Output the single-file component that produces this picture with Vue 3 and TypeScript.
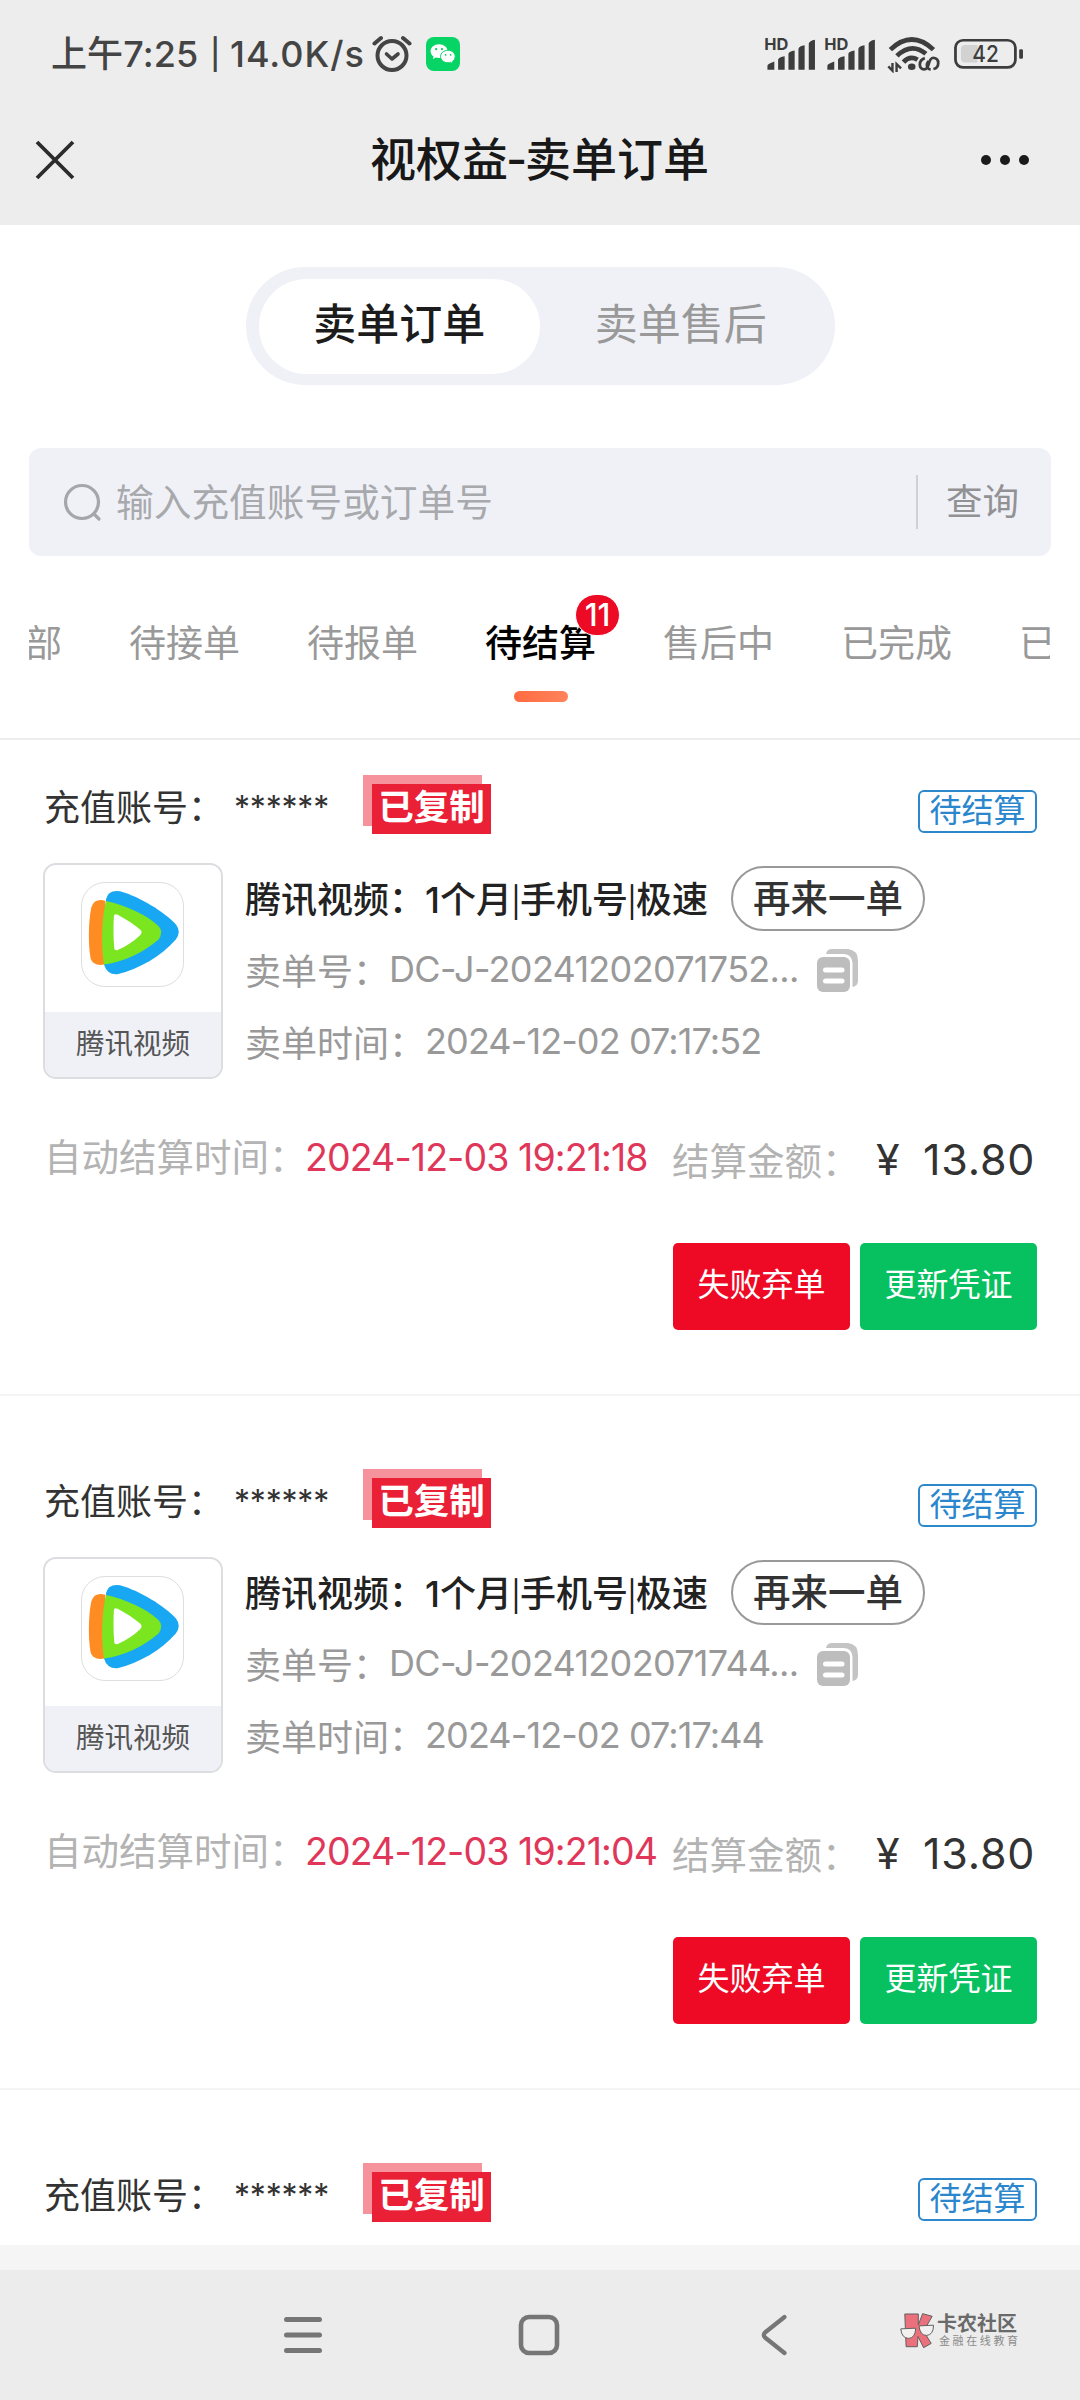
<script setup lang="ts">
interface OrderDetail {
  id: string
  soldAt: string
  settleAt: string
}

interface Order {
  key: number
  detail?: OrderDetail
}

interface Tab {
  label: string
  badge?: number
}

const tabs: Tab[] = [
  { label: '全部' },
  { label: '待接单' },
  { label: '待报单' },
  { label: '待结算', badge: 11 },
  { label: '售后中' },
  { label: '已完成' },
  { label: '已取消' },
]
const activeTab = '待结算'

const orders: Order[] = [
  { key: 1, detail: { id: 'DC-J-20241202071752...', soldAt: '2024-12-02 07:17:52', settleAt: '2024-12-03 19:21:18' } },
  { key: 2, detail: { id: 'DC-J-20241202071744...', soldAt: '2024-12-02 07:17:44', settleAt: '2024-12-03 19:21:04' } },
  { key: 3 },
]
</script>

<template>
  <div class="screen">
    <header class="top">
      <div class="status">
        <span class="clock">上午7:25</span>
        <span class="bar">|</span>
        <span class="speed">14.0K/s</span>
        <svg class="alarm" viewBox="0 0 40 38" width="40" height="38" fill="none" stroke="#444" stroke-linecap="round">
          <circle cx="20" cy="20.5" r="14.5" stroke-width="4" />
          <path d="M2.5 8.5 9 3M37.500 8.500 31 3" stroke-width="4" />
          <path d="M14.500 19 20 24 26 19" stroke-width="3.600" stroke-linejoin="round" />
        </svg>
        <svg class="wechat" viewBox="0 0 34 34" width="34" height="34">
          <rect width="34" height="34" rx="8" fill="#06d465" />
          <path d="M13 7.200c-4.800 0-8.400 3.100-8.400 7 0 2.200 1.100 4.100 3 5.400l-.7 2.500 2.900-1.500c1 .3 2.100.5 3.300.5 4.800 0 8.500-3.100 8.500-6.900s-3.800-7-8.600-7z" fill="#fff" />
          <path d="M22 13.300c-4.200 0-7.500 2.800-7.500 6.300s3.300 6.200 7.500 6.200c.9 0 1.800-.1 2.600-.4l2.400 1.300-.6-2.200c1.700-1.200 2.800-2.900 2.800-4.900 0-3.500-3-6.300-7.200-6.300z" fill="#fff" stroke="#06d465" stroke-width="1" />
          <g fill="#06c95c">
            <circle cx="10.200" cy="12.200" r="1.100" /><circle cx="16" cy="12.200" r="1.100" />
            <circle cx="19.600" cy="17.800" r=".9" /><circle cx="24.600" cy="17.800" r=".9" />
          </g>
        </svg>
        <svg class="signals" viewBox="650 105 755 115" width="260" height="38" preserveAspectRatio="none" fill="#3d3d3d">
          <g v-for="dx in [0, 174]" :key="dx" :transform="`translate(${dx} 0)`">
            <text x="651" y="150" font-size="50" font-weight="700" textLength="70" lengthAdjust="spacingAndGlyphs">HD</text>
            <path d="M660 210v-12q0-6 20-13v25zM691 210v-31q2-7 19-10v41zM721 210v-48q2-8 18-10v58zM750 210v-63q2-9 18-11v74zM780 210v-79q2-9 18-12v91z" />
          </g>
          <g fill="none" stroke="#3d3d3d" stroke-width="14">
            <path d="M1017 149Q1079 88 1142 149" />
            <path d="M1036 168Q1079 126 1120 162" />
            <path d="M1055 187Q1074 166 1096 180" />
          </g>
          <ellipse cx="1079" cy="201" rx="11" ry="10" />
          <path d="M1023 190v23l-12-13M1035 217v-24l13 13" fill="none" stroke="#3d3d3d" stroke-width="7" />
          <path d="M1117 175C1098 181 1098 209 1115 209 1134 208 1124 174 1142 174 1161 176 1160 204 1142 208M1128 184C1118 197 1125 209 1134 209" fill="none" stroke="#3d3d3d" stroke-width="8" />
          <rect x="1206" y="121" width="174" height="82" rx="22" fill="none" stroke="#3d3d3d" stroke-width="8" />
          <path d="M1234 135h36v53h-36q-12 0-12-12v-29q0-12 12-12z" fill="#d2d2d2" />
          <text x="1255" y="188" font-size="69" textLength="77" lengthAdjust="spacingAndGlyphs">42</text>
          <rect x="1391" y="148" width="11" height="29" rx="4" />
        </svg>
      </div>
      <div class="titlebar">
        <svg class="close" viewBox="0 0 40 40" width="40" height="40" stroke="#2b2b2b" stroke-width="3.800"><path d="M2 2 38 38M38 2 2 38" /></svg>
        <h1>视权益<span>-</span>卖单订单</h1>
        <svg class="more" viewBox="0 0 50 12" width="50" height="12" fill="#1b1b1b"><circle cx="6" cy="6" r="5" /><circle cx="25" cy="6" r="5" /><circle cx="44" cy="6" r="5" /></svg>
      </div>
    </header>

    <div class="segmented">
      <button class="seg on">卖单订单</button>
      <button class="seg">卖单售后</button>
    </div>

    <div class="search">
      <svg viewBox="0 0 40 40" width="40" height="40" fill="none" stroke="#a5a6aa" stroke-width="3.200" stroke-linecap="round"><circle cx="19" cy="20" r="16.500" /><path d="m31 32 5 5" /></svg>
      <span class="placeholder">输入充值账号或订单号</span>
      <span class="query">查询</span>
    </div>

    <nav class="tabs">
      <div v-for="tab in tabs" :key="tab.label" class="tab" :class="{ active: tab.label === activeTab }">
        {{ tab.label }}
        <i v-if="tab.badge" class="badge">{{ tab.badge }}</i>
      </div>
    </nav>

    <main class="list">
      <section v-for="order in orders" :key="order.key" class="order">
        <div class="account">
          <span class="label">充值账号：</span>
          <span class="stars">******</span>
          <span class="stamp"><b>已复制</b></span>
          <span class="state">待结算</span>
        </div>
        <template v-if="order.detail">
          <div class="product">
            <div class="brand">
              <div class="logo">
                <svg viewBox="239 393 294 308" width="101" height="103" preserveAspectRatio="none">
                  <path d="M309 441Q315 413 350 418C410 436 475 478 512 516Q529 538 512 562C470 612 405 650 342 666Q312 668 303 637Z" fill="#18a7f2" />
                  <path d="M307 446Q275 437 266 466C257 510 257 580 264 618Q270 642 304 637Z" fill="#ff8c22" />
                  <path d="M309 447C365 460 425 487 460 520Q478 538 462 562C420 600 362 628 303 637C294 580 296 500 309 447Z" fill="#7be51f" />
                  <path d="M332 491Q333 483 343 488C370 503 390 517 408 532Q417 540 408 549C389 568 368 582 343 593Q334 596 333 588C330 555 330 523 332 491Z" fill="#fff" />
                </svg>
              </div>
              <div class="caption">腾讯视频</div>
            </div>
            <div class="info">
              <div class="line name">
                <span class="goods">腾讯视频：1个月<u>|</u>手机号<u>|</u>极速</span>
                <button class="again">再来一单</button>
              </div>
              <div class="line">
                <span>卖单号：</span>
                <span class="id">{{ order.detail.id }}</span>
                <svg class="copy" viewBox="0 0 41 43" width="41" height="43">
                  <path d="M9 5Q10 0 15 0H31Q41 1 41 12V32Q41 37 35.500 38V14Q35 5.500 27 5Z" fill="#c4c4c4" />
                  <rect y="8" width="33" height="35" rx="6" fill="#bdbdbd" />
                  <path d="M8.500 21H25M8.500 32H25" stroke="#fff" stroke-width="5" stroke-linecap="round" />
                </svg>
              </div>
              <div class="line">
                <span>卖单时间：</span>
                <span class="date">{{ order.detail.soldAt }}</span>
              </div>
            </div>
          </div>
          <div class="settle">
            <span class="auto">自动结算时间：</span>
            <span class="deadline">{{ order.detail.settleAt }}</span>
            <span class="amount-label">结算金额：</span>
            <span class="yen">¥</span>
            <span class="amount">13.80</span>
          </div>
          <div class="actions">
            <button class="drop">失败弃单</button>
            <button class="update">更新凭证</button>
          </div>
        </template>
      </section>
    </main>

    <div class="safe"></div>
    <footer class="navbar">
      <svg class="menu" viewBox="0 0 38 38" width="38" height="38" stroke="#767676" stroke-width="5" stroke-linecap="round"><path d="M2.500 3.500h33M2.500 19h33M2.500 34.500h33" /></svg>
      <svg class="home" viewBox="0 0 42 42" width="42" height="42" fill="none" stroke="#767676" stroke-width="4.600"><rect x="3" y="3" width="36" height="36" rx="8" /></svg>
      <svg class="back" viewBox="0 0 28 42" width="28" height="42" fill="none" stroke="#767676" stroke-width="4.200" stroke-linecap="round" stroke-linejoin="round"><path d="M24.500 3 5 18.500Q2.500 21 5 23.500L24.500 39" /></svg>
      <div class="mark">
        <svg viewBox="120 95 105 112" width="35" height="37" stroke="#625f60" stroke-width="3">
          <path d="M134 101h41v33l13-34 29 8-26 45 23 37-23 13-17-34-2 31h-34z" fill="#ea707b" />
          <path d="M122 146l45-2q-1 29-21 31-22-1-24-29zM177 137l44-2q0 29-21 31-20 0-23-29z" fill="#f3f0f0" />
        </svg>
        <div class="words"><b>卡农社区</b><small>金融在线教育</small></div>
      </div>
    </footer>
  </div>
</template>

<style>
body {
  margin: 0;
  background: #fff;
}
</style>

<style scoped>
.screen {
  width: 1080px;
  height: 2400px;
  overflow: hidden;
  display: flex;
  flex-direction: column;
  background: #fff;
  color: #333;
  font-family: Inter, 'Noto Sans CJK SC', sans-serif;
  white-space: nowrap;
}
button {
  font-family: inherit;
  padding: 0;
  margin: 0;
  border: 0;
  background: none;
  box-sizing: border-box;
}
svg {
  display: block;
  flex: none;
}
.top {
  flex: none;
  height: 225px;
  background: #ededed;
}
.status {
  display: flex;
  align-items: center;
  height: 108px;
  padding-left: 51px;
  font-size: 36px;
  line-height: 50px;
  font-weight: 500;
  color: #444;
}
.clock {
  width: 157px;
  letter-spacing: 0.1px;
}
.bar {
  width: 22px;
  text-indent: 2px;
  font-size: 30px;
}
.speed {
  width: 142px;
  letter-spacing: 1px;
}
.wechat {
  margin-left: 14px;
}
.signals {
  margin-left: 304px;
}
.titlebar {
  display: flex;
  align-items: center;
  height: 104px;
  padding-left: 35px;
}
.titlebar h1 {
  width: 610px;
  margin: 0 0 0 295px;
  font-size: 46px;
  font-weight: 500;
  line-height: 60px;
  padding-bottom: 2px;
  color: #181818;
}
.titlebar h1 span {
  display: inline-block;
  width: 17px;
  text-indent: -2px;
}
.segmented {
  flex: none;
  align-self: center;
  display: flex;
  box-sizing: border-box;
  width: 589px;
  height: 118px;
  margin-top: 42px;
  padding: 12px 13px;
  border-radius: 59px;
  background: #f0f1f7;
}
.seg {
  flex: 1;
  height: 95px;
  padding-bottom: 5px;
  border-radius: 48px;
  font-size: 43px;
  line-height: 90px;
  color: #999;
}
.seg.on {
  background: #fff;
  color: #1c1c1c;
  font-weight: 500;
}
.search {
  flex: none;
  display: flex;
  align-items: center;
  height: 108px;
  margin: 63px 29px 0;
  padding-left: 34px;
  border-radius: 12px;
  background: #f0f1f7;
  font-size: 37.7px;
  line-height: 54px;
  color: #a8a9ac;
}
.placeholder {
  flex: 1;
  padding-left: 13px;
}
.query {
  width: 105px;
  padding-left: 28px;
  border-left: 2px solid #cfd0d3;
  font-size: 36.5px;
  color: #929295;
}
.tabs {
  flex: none;
  display: flex;
  gap: 67px;
  width: 1021px;
  height: 182px;
  margin-left: 29px;
  overflow: hidden;
  font-size: 37px;
  line-height: 50px;
  color: #999;
}
.tab {
  flex: none;
  position: relative;
  padding-top: 62.5px;
}
.tab:first-child {
  margin-left: -41px;
}
.tab.active {
  color: #000;
  font-weight: 500;
}
.tab.active::after {
  content: '';
  display: block;
  width: 54px;
  height: 11px;
  margin: 22.5px auto 0;
  border-radius: 6px;
  background: linear-gradient(90deg, #ff6b42, #ff835b);
}
.badge {
  position: absolute;
  left: 90px;
  top: 38px;
  width: 45px;
  height: 42px;
  box-sizing: border-box;
  border: 1px solid #fff;
  border-radius: 21px;
  background: #ec0a24;
  color: #fff;
  font-size: 31px;
  font-style: normal;
  line-height: 40px;
  text-align: center;
}
.list {
  flex: none;
  height: 1507px;
  overflow: hidden;
  box-sizing: border-box;
  border-top: 2px solid #ededee;
}
.order {
  height: 694.5px;
  box-sizing: border-box;
  padding: 73px 43px 0 43px;
  border-bottom: 2px solid #f4f4f5;
}
.order:first-child {
  height: 655.5px;
  padding-top: 34.5px;
}
.account {
  display: flex;
  height: 60px;
  padding-left: 1px;
  font-size: 36px;
  line-height: 66px;
}
.label {
  width: 190px;
}
.stars {
  width: 129px;
  font-size: 32px;
  letter-spacing: -0.2px;
}
.stamp {
  position: relative;
  width: 128px;
  height: 59px;
}
.stamp::before {
  content: '';
  position: absolute;
  inset: 0 9px 8px 0;
  background: #f6929c;
}
.stamp b {
  position: absolute;
  inset: 9px 0 0 9px;
  background: #ea2036;
  color: #fff;
  font-size: 35.5px;
  font-weight: 700;
  line-height: 47px;
  text-align: center;
}
.state {
  box-sizing: border-box;
  width: 119px;
  height: 43px;
  margin: 15px 0 0 auto;
  border: 2px solid #2d87cb;
  border-radius: 6px;
  font-size: 32px;
  line-height: 37px;
  text-align: center;
  color: #2b87cd;
}
.product {
  display: flex;
  margin-top: 28px;
}
.brand {
  flex: none;
  box-sizing: border-box;
  width: 180px;
  height: 216px;
  border: 2px solid #dcdde0;
  border-radius: 13px;
  overflow: hidden;
}
.logo {
  height: 147px;
  box-sizing: border-box;
  padding: 17px 0 0 36px;
}
.logo svg {
  border: 1px solid #dedede;
  border-radius: 24px;
}
.caption {
  height: 68px;
  background: #f0f1f7;
  color: #555;
  font-size: 28.5px;
  line-height: 64px;
  text-align: center;
}
.info {
  padding-left: 22px;
  font-size: 36px;
  color: #999;
}
.line {
  display: flex;
  align-items: center;
  height: 72px;
}
.line > span {
  padding-bottom: 3px;
}
.name {
  color: #222;
}
.goods {
  width: 486px;
  font-weight: 500;
}
.goods u {
  text-decoration: none;
  display: inline-block;
  width: 8px;
  text-indent: -1px;
  font-size: 30px;
  font-weight: 400;
}
.again {
  width: 194px;
  height: 65px;
  border: 2px solid #999;
  border-radius: 33px;
  font-size: 37.5px;
  font-weight: 500;
  line-height: 57px;
  color: #333;
}
.id {
  width: 428px;
  letter-spacing: -0.7px;
}
.date {
  letter-spacing: -0.9px;
}
.settle {
  display: flex;
  align-items: baseline;
  height: 60px;
  margin-top: 46px;
  padding-left: 1px;
  font-size: 37.5px;
  line-height: 60px;
  color: #b3b3b3;
}
.auto {
  width: 261px;
}
.deadline {
  width: 367px;
  letter-spacing: -0.9px;
  color: #df3659;
}
.amount-label {
  width: 204px;
  position: relative;
  top: 4px;
}
.yen,
.amount {
  position: relative;
  top: 4px;
  font-size: 43px;
  color: #333;
}
.yen {
  width: 47px;
}
.amount {
  letter-spacing: 0.8px;
}
.actions {
  display: flex;
  justify-content: flex-end;
  gap: 10px;
  margin-top: 58.5px;
}
.actions button {
  width: 177px;
  height: 87px;
  border-radius: 5px;
  font-size: 32px;
  line-height: 82px;
  padding-bottom: 4px;
  color: #fff;
}
.drop {
  background: #ee0a24;
}
.update {
  background: #07c160;
}
.safe {
  flex: none;
  height: 25px;
  background: #f5f5f5;
}
.navbar {
  flex: none;
  display: flex;
  align-items: center;
  height: 130px;
  background: #ececec;
}
.menu {
  margin-left: 284px;
}
.home {
  margin-left: 196px;
}
.back {
  margin-left: 200px;
}
.mark {
  display: flex;
  align-items: flex-start;
  margin: -9px 0 0 112px;
  color: #6a6a6a;
}
.words {
  padding: 2px 0 0 2px;
}
.words b,
.words small {
  display: block;
}
.words b {
  font-size: 20px;
  font-weight: 700;
  line-height: 20px;
}
.words small {
  padding-left: 2px;
  font-size: 11px;
  line-height: 14px;
  letter-spacing: 2.6px;
  color: #8a8a8a;
}
</style>
